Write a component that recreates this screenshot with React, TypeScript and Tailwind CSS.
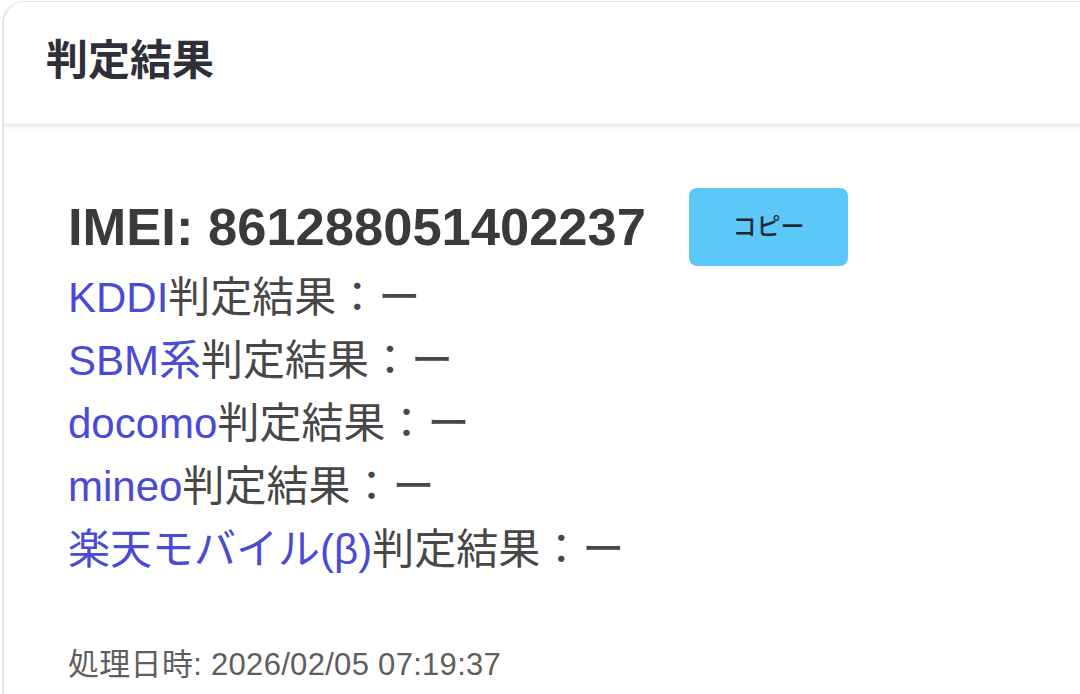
import React from "react";

const CARRIERS = ["KDDI", "SBM系", "docomo", "mineo", "楽天モバイル(β)"];

export default function App() {
  return (
    <div
      className="w-[1080px] h-[694px] overflow-hidden bg-white pl-[2px] pt-[1px]"
      style={{ fontFamily: '"Liberation Sans", "Noto Sans CJK JP", sans-serif' }}
    >
      <div className="w-[1100px] h-[720px] rounded-tl-[22px] border-l-2 border-t border-[#e6e6e6] bg-white">
        {/* Header */}
        <div className="h-[125px] flex items-center pl-[42px] pb-[4px] border-b-[4px] border-[#eeeeee] shadow-[0_3px_4px_rgba(0,0,0,0.03)]">
          <h2 className="text-[42px] font-bold text-[#2f2f3a]">判定結果</h2>
        </div>

        {/* Body */}
        <div className="pl-[64px] pt-[61px]">
          <div className="flex items-center gap-[43px] h-[78px]">
            <span className="text-[52.5px] font-bold text-[#3a3a3a] leading-none">IMEI: 861288051402237</span>
            <button className="w-[159px] h-[78px] rounded-[8px] bg-[#5bc8f7] text-[24px] text-[#1f2a36] font-medium">
              コピー
            </button>
          </div>

          <div className="text-[42px] leading-[63px] text-[#474747]">
            {CARRIERS.map((c) => (
              <div key={c}>
                <span className="text-[#4a4ad4]">{c}</span>判定結果：ー
              </div>
            ))}
          </div>

          <div className="mt-[63px] text-[31px] leading-[42px] tracking-[0.3px] text-[#5e5e5e]">
            処理日時: 2026/02/05 07:19:37
          </div>
        </div>
      </div>
    </div>
  );
}
